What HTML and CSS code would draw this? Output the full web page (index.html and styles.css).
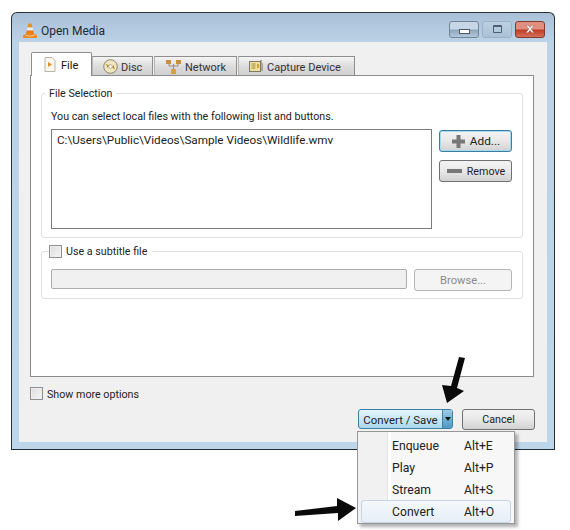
FILE: index.html
```html
<!DOCTYPE html>
<html lang="en">

<head>
    <meta charset="utf-8">
    <title>Open Media</title>
    <link rel="stylesheet" href="styles.css">
</head>

<body>
    <div class="window">
        <div class="titlebar">
            <svg class="vlc" width="16" height="17" viewBox="0 0 16 17">
                <path d="M6.500 1.500h3l1 4h-5z" fill="#f08a1c"/>
                <path d="M5.500 5.500h5l.7 3H4.800z" fill="#eee"/>
                <path d="M4.800 8.500h6.400l1 4H3.800z" fill="#ee7d11"/>
                <path d="M1 13.500L3.500 12h9l2.500 1.500V16H1z" fill="#e98a22"/>
                <path d="M3.500 12.500q4.500 2.500 9 0v1q-4.500 2-9 0z" fill="#f8d9a8"/>
            </svg>
            <span class="title">Open Media</span>
            <div class="caption">
                <div class="cap_btn"><span class="min_glyph"></span></div>
                <div class="cap_btn cap_max"><span class="max_glyph"></span></div>
                <div class="cap_btn cap_close">
                    <svg width="10" height="8" viewBox="0 0 13 10">
                        <path d="M1 0h3l2.500 3L9 0h3L8 5l4 5H9L6.500 7 4 10H1l4-5z" fill="#fff" stroke="#7a2a20" stroke-width=".5"/>
                    </svg>
                </div>
            </div>
        </div>

        <div class="client">
            <nav class="tabs">
                <a class="tab valgt">
                    <svg width="12" height="15" viewBox="0 0 12 15">
                        <path d="M1 .5h7l3 3v11H1z" fill="#fbf8f0" stroke="#b9b4a8"/>
                        <path d="M4 5l4 2.500L4 10z" fill="#e0902a"/>
                    </svg>
                    File
                </a>
                <a class="tab tab_disc">
                    <svg width="15" height="15" viewBox="0 0 15 15">
                        <circle cx="7.500" cy="7.500" r="6.800" fill="#efe6c4" stroke="#8f8668"/>
                        <path d="M3 4.500l3 2L4.500 9zM12 10.500l-3-2L10.500 6z" fill="#b8902c"/>
                        <circle cx="7.500" cy="7.500" r="1.800" fill="#fff" stroke="#8f8668" stroke-width=".6"/>
                    </svg>
                    Disc
                </a>
                <a class="tab tab_net">
                    <svg width="15" height="14" viewBox="0 0 15 14">
                        <path d="M7.500 4v6M3 4v2h9V4" fill="none" stroke="#9a8f70"/>
                        <rect x="0" y="0" width="5" height="4" fill="#c98f3c"/>
                        <rect x="10" y="0" width="5" height="4" fill="#c98f3c"/>
                        <rect x="5" y="9" width="5" height="5" fill="#d9a040"/>
                    </svg>
                    Network
                </a>
                <a class="tab tab_cap">
                    <svg width="14" height="14" viewBox="0 0 14 14">
                        <rect x=".5" y="1.500" width="11" height="10" fill="#efdf9c" stroke="#7f7a68"/>
                        <path d="M2.500 4h4M2.500 6h4M2.500 8h4" stroke="#a08a40"/>
                        <path d="M8 4h2v4H8z" fill="#c9a23c"/>
                        <path d="M12 0v3M13 11V3" stroke="#77735f"/>
                    </svg>
                    Capture Device
                </a>
            </nav>

            <section class="pane">
                <fieldset class="gruppe gruppe_file">
                    <legend>File Selection</legend>
                    <p class="hint">You can select local files with the following list and buttons.</p>
                    <div class="file_row">
                        <div class="liste">C:\Users\Public\Videos\Sample Videos\Wildlife.wmv</div>
                        <div class="side_knapper">
                            <button class="knap knap_fokus">
                                <svg width="15" height="15" viewBox="0 0 15 15">
                                    <path d="M5.500 1h4v4.500H14v4H9.500V14h-4V9.500H1v-4h4.500z" fill="#777"/>
                                </svg>
                                Add...
                            </button>
                            <button class="knap">
                                <svg width="17" height="6" viewBox="0 0 17 6">
                                    <rect x="1" y="1" width="15" height="4" fill="#777"/>
                                </svg>
                                Remove
                            </button>
                        </div>
                    </div>
                </fieldset>

                <fieldset class="gruppe gruppe_sub">
                    <legend><span class="tjek"></span>Use a subtitle file</legend>
                    <div class="sub_row">
                        <div class="felt"></div>
                        <button class="knap knap_off">Browse...</button>
                    </div>
                </fieldset>
            </section>

            <label class="mere"><span class="tjek"></span>Show more options</label>

            <div class="bund">
                <div class="split">
                    <span class="split_tekst">Convert / Save</span>
                    <span class="split_pil"></span>

                    <ul class="menu">
                        <li><span class="navn">Enqueue</span><span>Alt+E</span></li>
                        <li><span class="navn">Play</span><span>Alt+P</span></li>
                        <li><span class="navn">Stream</span><span>Alt+S</span></li>
                        <li class="aktiv"><span class="navn">Convert</span><span>Alt+O</span></li>
                    </ul>
                </div>
                <button class="knap knap_cancel">Cancel</button>
            </div>
        </div>
    </div>

    <!-- sorte pile oven paa screenshot -->
    <svg class="pile" width="570" height="530" viewBox="0 0 570 530">
        <path d="M459 357l6 1-8 30 7 3-17 12-5-18 9 1z" fill="#0a0a0a"/>
        <path d="M295 511l42-5v-8l19 10-18 13v-8l-43 3z" fill="#0a0a0a"/>
    </svg>
</body>

</html>
```
FILE: styles.css
```css
* {
    box-sizing: border-box;
}

body {
    position: relative;
    margin: 0;
    height: 530px;
    padding: 12px 0 0 11px;
    background-color: #fff;
    font-family: Roboto, sans-serif;
    font-size: 10.700px;
    color: #222;
    overflow: hidden;
}

.window {
    display: flex;
    flex-direction: column;
    width: 544px;
    height: 438px;
    padding: 0 7px 7px;
    border: 1px solid #2a2f33;
    border-bottom-color: #1c2c33;
    border-radius: 6px 6px 0 0;
    background: linear-gradient(#a9c0d8, #bcd2e6 30px, #bdd6ea);
}

.titlebar {
    display: flex;
    align-items: center;
    height: 29px;
    flex: none;
}

.vlc {
    margin: 5px 0 0 3px;
}

.title {
    margin: 6px 0 0 3px;
    font-size: 12px;
    color: #1d2a33;
}

.caption {
    display: flex;
    gap: 3px;
    margin: 3px 2px 0 auto;
}

.cap_btn {
    display: flex;
    align-items: center;
    justify-content: center;
    width: 30px;
    height: 17px;
    border: 1px solid #6f8598;
    border-radius: 3px;
    background: linear-gradient(#c6d6e6 45%, #8ea6bb 55%, #b4c8da);
}

.cap_max {
    border-color: #9cb2c5;
    background: linear-gradient(#bcd0e2, #aac2d6);
}

.cap_close {
    border-color: #7f3a30;
    background: linear-gradient(#e08f7e 45%, #c23c28 55%, #d67058);
}

.min_glyph {
    width: 11px;
    height: 5px;
    margin-top: 5px;
    border: 1px solid #46586a;
    background-color: #fff;
}

.max_glyph {
    width: 9px;
    height: 8px;
    border: 1px solid #4c5e70;
    border-top-width: 2px;
    border-radius: 1px;
}

.client {
    display: flex;
    flex-direction: column;
    flex: 1;
    padding: 11px 13px 0 11px;
    background-color: #f0f0f0;
}

.tabs {
    display: flex;
    align-items: flex-end;
    height: 23px;
    flex: none;
    margin-bottom: -1px;
    padding-left: 1px;
}

.tab {
    display: flex;
    align-items: center;
    gap: 4px;
    height: 20px;
    margin-right: 1px;
    padding-top: 2px;
    padding-left: 11px;
    border: 1px solid #8e8e8e;
    border-left-color: #b5b5b5;
    border-bottom: none;
    background: linear-gradient(#f4f4f4, #dcdcdc 50%, #cfcfcf);
    font-size: 11px;
    color: #333;
}

.tab svg {
    margin-top: -2px;
}

.valgt {
    position: relative;
    gap: 5px;
    width: 61px;
    height: 24px;
    margin-right: 0;
    padding-left: 12px;
    border-color: #8e8e8e;
    border-radius: 2px 2px 0 0;
    background: #fff;
    color: #111;
    z-index: 2;
}

.tab_disc {
    gap: 3px;
    width: 61px;
    padding-left: 10px;
}

.tab_net {
    width: 83px;
}

.tab_cap {
    width: 117px;
    padding-left: 10px;
}

.pane {
    height: 302px;
    flex: none;
    padding: 9px 11px 0 10px;
    border: 1px solid #8b8b8b;
    background-color: #fff;
}

.gruppe {
    margin: 0;
    padding: 0 10px 0 9px;
    border: 1px solid #e0e0e0;
    border-radius: 3px;
}

.gruppe legend {
    display: flex;
    align-items: center;
    height: 16px;
    margin-left: -6px;
    padding: 0 4px;
    color: #222;
}

.gruppe_file {
    height: 153px;
}

.hint {
    margin: 8px 0 0;
    line-height: 15px;
}

.file_row {
    display: flex;
    gap: 7px;
    margin-top: 5px;
}

.liste {
    width: 381px;
    height: 100px;
    padding: 2px 5px;
    border: 1px solid #7a7a7a;
    font-size: 11.700px;
    line-height: 16px;
}

.side_knapper {
    display: flex;
    flex-direction: column;
    gap: 8px;
    margin-top: 1px;
}

.knap {
    display: flex;
    align-items: center;
    justify-content: center;
    gap: 4px;
    width: 73px;
    height: 22px;
    padding: 0;
    border: 1px solid #707070;
    border-radius: 3px;
    background: linear-gradient(#f3f3f3, #e8e8e8 50%, #d2d2d2);
    font-family: inherit;
    font-size: 10.700px;
    color: #222;
}

.knap_fokus {
    border-color: #3f7d9e;
    box-shadow: inset 0 0 0 1px #9fdcf2;
    font-size: 11.800px;
}

.knap_off {
    width: 98px;
    border-color: #b5b5b5;
    background: #f4f4f4;
    font-size: 11.200px;
    color: #8a8a8a;
}

.gruppe_sub {
    height: 56px;
    margin-top: 5px;
}

.gruppe .tjek {
    align-self: center;
}

.gruppe_sub legend {
    align-items: flex-end;
    margin-left: -2px;
    padding: 0 5px 0 0;
    line-height: 14px;
}

.tjek {
    width: 13px;
    height: 13px;
    margin-right: 4px;
    border: 1px solid #8e8f8f;
    background: linear-gradient(135deg, #dcdcdc, #f6f6f6);
    box-shadow: inset 0 0 0 1px #eee;
}

.sub_row {
    display: flex;
    gap: 7px;
    margin-top: 10px;
}

.felt {
    width: 356px;
    height: 20px;
    border: 1px solid #acacac;
    border-radius: 2px;
    background-color: #f0f0f0;
}

.mere {
    display: flex;
    align-items: flex-end;
    height: 14px;
    flex: none;
    margin-top: 10px;
    line-height: 13px;
}

.mere .tjek {
    align-self: flex-start;
}

.bund {
    display: flex;
    gap: 9px;
    justify-content: flex-end;
    margin: 8px -1px 0 0;
}

.split {
    position: relative;
    display: flex;
    width: 95px;
    height: 20px;
    border: 1px solid #3c7fa3;
    border-radius: 3px;
    background: linear-gradient(#e6f5fc, #c9e8f7 50%, #a9d8ee);
    font-size: 11.400px;
    color: #222;
}

.split_tekst {
    width: 83px;
    line-height: 20px;
    text-align: center;
}

.split_pil {
    position: relative;
    flex: 1;
    border-left: 1px solid #3c7fa3;
    background: linear-gradient(#9ccbe6, #4f97c2);
}

.split_pil::after {
    content: "";
    position: absolute;
    top: 7px;
    left: 2px;
    border: 3.500px solid transparent;
    border-top: 4px solid #111;
    border-bottom: none;
}

.knap_cancel {
    height: 21px;
}

.menu {
    position: absolute;
    top: 21px;
    left: -2px;
    width: 158px;
    height: 93px;
    margin: 0;
    padding: 3px 3px 0;
    border: 1px solid #979797;
    background: linear-gradient(90deg, #f1f1f1 29px, #e2e3e3 29px, #e2e3e3 30px, #fff 30px, #fff 33px, #f7f7f7 33px);
    box-shadow: 3px 3px 3px rgba(0, 0, 0, 0.3);
    font-size: 12.200px;
    list-style: none;
    z-index: 5;
}

.menu li {
    display: flex;
    align-items: center;
    height: 22px;
    padding-left: 31px;
}

.navn {
    width: 72px;
}

.menu .aktiv {
    height: 23px;
    margin-top: -1px;
    padding-left: 30px;
    border: 1px solid #c5d6e6;
    border-radius: 3px;
    background: linear-gradient(#f4f8fc, #e6eef7);
}

.pile {
    position: absolute;
    top: 0;
    left: 0;
    pointer-events: none;
    z-index: 10;
}
```
